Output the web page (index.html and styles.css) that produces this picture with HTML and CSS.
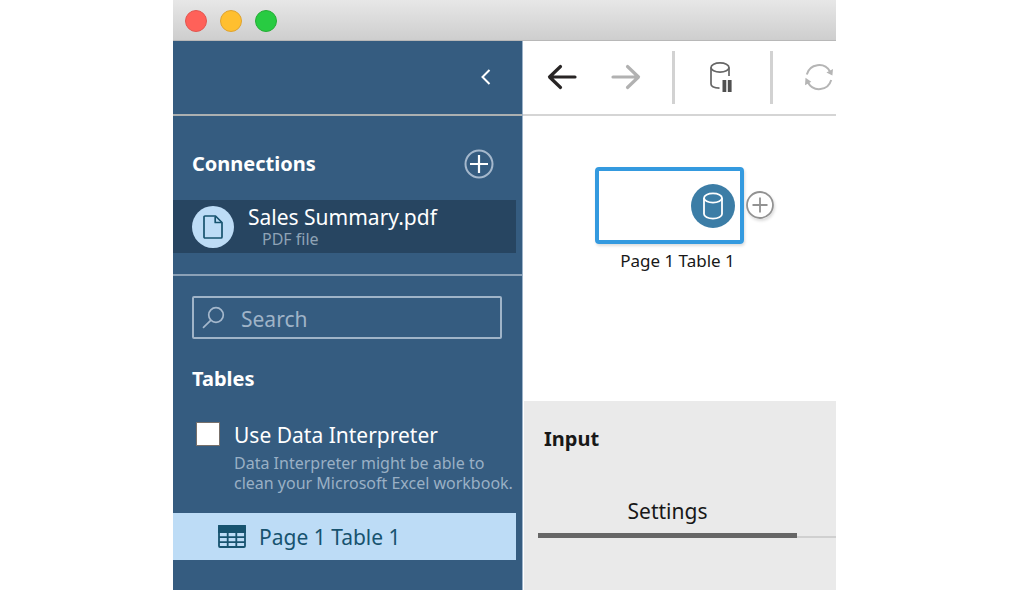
FILE: index.html
```html
<!DOCTYPE html>
<html lang="en">
<head>
<meta charset="utf-8">
<meta name="viewport" content="width=device-width, initial-scale=1">
<title>Sales Summary</title>
<link rel="stylesheet" href="styles.css">
</head>
<body>
<div class="window">
  <header class="titlebar">
    <button class="dot dot-close" aria-label="Close"></button>
    <button class="dot dot-minimize" aria-label="Minimize"></button>
    <button class="dot dot-zoom" aria-label="Zoom"></button>
  </header>
  <div class="workspace">
    <aside class="sidebar">
      <div class="sidebar-top">
        <button class="icon-button" aria-label="Collapse pane">
          <svg width="12" height="18" viewBox="0 0 12 18" fill="none" stroke="#fff" stroke-width="2"><path d="M9.500 2 2.500 9l7 7"/></svg>
        </button>
      </div>
      <section class="connections">
        <div class="section-head">
          <h2 class="heading">Connections</h2>
          <button class="icon-button" aria-label="Add connection">
            <svg width="30" height="30" viewBox="0 0 30 30" fill="none"><circle cx="15" cy="15" r="13.500" stroke="#a5b8cc" stroke-width="2"/><path d="M15 6v18M6 15h18" stroke="#fff" stroke-width="2.200"/></svg>
          </button>
        </div>
        <button class="connection">
          <span class="connection-icon">
            <svg width="20" height="24" viewBox="0 0 20 24" fill="none" stroke="#17536f" stroke-width="1.700" stroke-linejoin="round"><path d="M2 1h10.500L19 7.500V22a1 1 0 0 1-1 1H2a1 1 0 0 1-1-1V2a1 1 0 0 1 1-1Z"/><path d="M12.200 1.500V7.500H18.500"/></svg>
          </span>
          <span class="connection-text">
            <span class="connection-name">Sales Summary.pdf</span>
            <span class="connection-type">PDF file</span>
          </span>
        </button>
      </section>
      <section class="tables">
        <label class="search">
          <svg width="24" height="24" viewBox="0 0 24 24" fill="none" stroke="#a5b8cc" stroke-width="1.700" stroke-linecap="round"><circle cx="14" cy="9" r="7.300"/><path d="M8.700 14.400 1.500 21.300"/></svg>
          <input class="search-input" type="text" placeholder="Search" aria-label="Search">
        </label>
        <h2 class="heading tables-heading">Tables</h2>
        <div class="interpreter">
          <input class="checkbox" type="checkbox" id="interpreter">
          <div>
            <label class="interpreter-label" for="interpreter">Use Data Interpreter</label>
            <p class="hint">Data Interpreter might be able to<br>clean your Microsoft Excel workbook.</p>
          </div>
        </div>
        <button class="table-item">
          <svg width="28" height="23" viewBox="0 0 28 23" fill="none" stroke="#17536f" stroke-width="1.800"><rect x="1" y="1" width="26" height="21" rx="1"/><path d="M1 1h26v6H1Z" fill="#17536f"/><path d="M1 12.200h26M1 17.200h26M9.700 7v15M18.300 7v15"/></svg>
          Page 1 Table 1
        </button>
      </section>
    </aside>
    <main class="main">
      <nav class="toolbar">
        <button class="icon-button back" aria-label="Back">
          <svg width="30" height="26" viewBox="0 0 30 26" fill="none" stroke="#282525" stroke-width="3.200" stroke-linecap="round" stroke-linejoin="round"><path d="M28 13H3M13.500 2.500 2.500 13l11 10.500"/></svg>
        </button>
        <button class="icon-button forward" aria-label="Forward">
          <svg width="30" height="26" viewBox="0 0 30 26" fill="none" stroke="#b1b1b1" stroke-width="3.200" stroke-linecap="round" stroke-linejoin="round"><path d="M2 13h25M16.500 2.500l11 10.500-11 10.500"/></svg>
        </button>
        <span class="separator"></span>
        <button class="icon-button pause" aria-label="Pause data updates">
          <svg width="24" height="32" viewBox="0 0 24 32" fill="none" stroke="#666" stroke-width="1.700"><ellipse cx="11" cy="6.500" rx="9" ry="4.700"/><path d="M2 6.500V23c0 2.200 3.200 3.900 8.500 4.100M20 6.500V15"/><path d="M13.500 19h3.800v12h-3.800ZM18.800 19h3.800v12h-3.800Z" fill="#505050" stroke="none"/></svg>
        </button>
        <span class="separator"></span>
        <button class="icon-button refresh" aria-label="Refresh">
          <svg width="30" height="28" viewBox="0 0 30 28" fill="none" stroke="#b5b5b5" stroke-width="2"><path d="M2.800 11.500A12.600 12.600 0 0 1 26 8.500M27.200 17A12.600 12.600 0 0 1 4 19.500"/><path d="m29 6-.6 6.500-6-3.100ZM1 22.200l.5-7.500 5.800 4Z" fill="#b5b5b5" stroke="none"/></svg>
        </button>
      </nav>
      <div class="canvas">
        <div class="node">
          <div class="node-box">
            <span class="node-icon">
              <svg width="22" height="30" viewBox="0 0 22 30" fill="none" stroke="#fff" stroke-width="1.800"><ellipse cx="11" cy="7" rx="9" ry="4.600"/><path d="M2 7v16c0 2.500 4 4.600 9 4.600s9-2.100 9-4.600V7"/></svg>
            </span>
          </div>
          <div class="node-label">Page 1 Table 1</div>
          <button class="icon-button node-add" aria-label="Add step">
            <svg width="28" height="28" viewBox="0 0 28 28" fill="none" stroke="#929292" stroke-width="1.800"><circle cx="14" cy="14" r="13" fill="#fff"/><path d="M14 6.500v15M6.500 14h15"/></svg>
          </button>
        </div>
      </div>
      <section class="panel">
        <h2 class="panel-title">Input</h2>
        <div class="tabs" role="tablist">
          <button class="tab" role="tab" aria-selected="true">Settings</button>
        </div>
      </section>
    </main>
  </div>
</div>
</body>
</html>
```
FILE: styles.css
```css
* {
  box-sizing: border-box;
}

body {
  margin: 0;
  background: #fff;
  color: #181818;
  font-family: "Noto Sans", "Open Sans", sans-serif;
}

h2,
p {
  margin: 0;
}

button {
  padding: 0;
  border: 0;
  background: none;
  color: inherit;
  font: inherit;
}

svg {
  display: block;
  flex: none;
}

.window {
  display: flex;
  flex-direction: column;
  min-height: 100vh;
  margin: 0 173px;
  overflow: hidden;
}

.titlebar {
  display: flex;
  align-items: center;
  gap: 13px;
  height: 41px;
  padding: 2px 12px 0;
  border-bottom: 1px solid #b8b8b8;
  background: linear-gradient(#e7e7e7, #cecece);
}

.dot {
  width: 22px;
  height: 22px;
  border: 1px solid;
  border-radius: 50%;
}

.dot-close {
  border-color: #e25650;
  background: #ff6159;
}

.dot-minimize {
  border-color: #dfa32f;
  background: #ffbf2f;
}

.dot-zoom {
  border-color: #25ad36;
  background: #28cb42;
}

.workspace {
  display: flex;
  flex: 1;
}

.icon-button {
  display: flex;
  align-items: center;
  justify-content: center;
}

.sidebar {
  flex: none;
  width: 350px;
  border-right: 1px solid #9db3c9;
  background: #355c80;
  color: #fff;
}

.sidebar-top {
  display: flex;
  align-items: center;
  justify-content: flex-end;
  height: 75px;
  padding: 0 30px 1px 0;
  border-bottom: 2px solid #acb0b1;
}

.connections {
  padding: 33px 0 21px;
  border-bottom: 2px solid #8ba1b7;
}

.section-head {
  display: flex;
  align-items: center;
  justify-content: space-between;
  padding: 0 28px 0 19px;
}

.heading {
  font-size: 20px;
  font-weight: 700;
  line-height: 30px;
}

.connection {
  display: flex;
  align-items: center;
  gap: 14px;
  width: calc(100% - 6px);
  height: 53px;
  margin-top: 21px;
  padding-left: 19px;
  background: #274561;
  text-align: left;
}

.connection-icon {
  display: flex;
  align-items: center;
  justify-content: center;
  width: 42px;
  height: 42px;
  border-radius: 50%;
  background: #bddcf6;
}

.connection-text {
  display: flex;
  flex-direction: column;
}

.connection-name {
  font-size: 21px;
  line-height: 24px;
}

.connection-type {
  padding-left: 14px;
  color: #8fa3b6;
  font-size: 16px;
  line-height: 20px;
}

.search {
  display: flex;
  align-items: center;
  gap: 15px;
  height: 43px;
  margin: 20px 20px 0 19px;
  padding: 0 8px;
  border: 2px solid #a0b4c8;
  border-radius: 2px;
}

.search-input {
  flex: 1;
  min-width: 0;
  padding: 2px 0 0;
  border: 0;
  outline: 0;
  background: none;
  color: #fff;
  font: inherit;
  font-size: 21px;
  line-height: 30px;
}

.search-input::placeholder {
  color: #a0b4c8;
  opacity: 1;
}

.tables-heading {
  margin: 25px 0 0 19px;
}

.interpreter {
  display: flex;
  gap: 14px;
  padding: 26px 0 0 23px;
}

.checkbox {
  flex: none;
  width: 24px;
  height: 24px;
  margin: 2px 0 0;
  border: 1px solid #77706b;
  background: #fff;
  appearance: none;
}

.interpreter-label {
  display: block;
  font-size: 21px;
  line-height: 30px;
}

.hint {
  margin-top: 3px;
  color: #9ab0c5;
  font-size: 16px;
  line-height: 20px;
  white-space: nowrap;
}

.table-item {
  display: flex;
  align-items: center;
  gap: 13px;
  width: calc(100% - 6px);
  height: 47px;
  margin-top: 20px;
  padding-left: 45px;
  background: #bddcf6;
  color: #17536f;
  font-size: 21px;
}

.main {
  display: flex;
  flex: 1;
  flex-direction: column;
  min-width: 0;
}

.toolbar {
  display: flex;
  align-items: center;
  height: 75px;
  padding: 0 0 1px 24px;
  border-bottom: 2px solid #d5d5d5;
}

.forward {
  margin: 0 31px 0 34px;
}

.separator {
  flex: none;
  width: 3px;
  height: 53px;
  background: #d2d2d2;
}

.pause {
  margin: 0 37px 0 34px;
}

.refresh {
  margin-left: 31px;
}

.canvas {
  position: relative;
  height: 285px;
}

.node {
  position: absolute;
  top: 51px;
  left: 72px;
  width: 149px;
}

.node-box {
  display: flex;
  align-items: center;
  justify-content: flex-end;
  height: 77px;
  padding-right: 5px;
  border: 4px solid #349adf;
  border-radius: 4px;
  box-shadow: 1px 2px 3px #ddd;
}

.node-icon {
  display: flex;
  align-items: center;
  justify-content: center;
  width: 44px;
  height: 44px;
  border-radius: 50%;
  background: #3c7da6;
}

.node-label {
  margin-top: 5px;
  padding-left: 16px;
  font-size: 17px;
  line-height: 24px;
  text-align: center;
}

.node-add {
  position: absolute;
  top: 24px;
  left: 151px;
  border-radius: 50%;
  box-shadow: 1px 2px 3px #ddd;
}

.panel {
  flex: 1;
  margin-left: 1px;
  background: #eaeaea;
}

.panel-title {
  padding: 23px 0 0 20px;
  font-size: 20px;
  line-height: 30px;
}

.tabs {
  display: flex;
  margin: 36px 0 0 14px;
  box-shadow: inset 0 -2px #d0d0d0;
}

.tab {
  width: 259px;
  height: 48px;
  padding-bottom: 2px;
  border-bottom: 5px solid #666;
  font-size: 21px;
}
```
